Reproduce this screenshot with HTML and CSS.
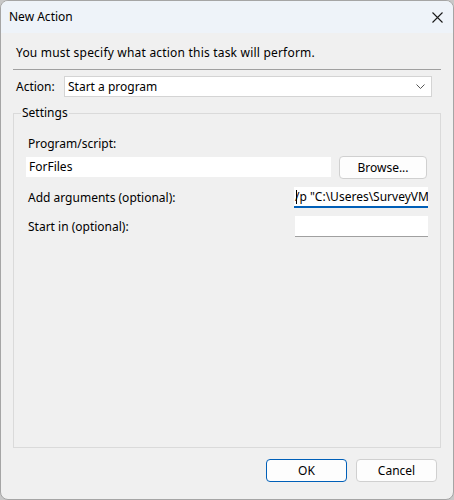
FILE: index.html
```html
<!DOCTYPE html>
<html lang="en">
<head>
<meta charset="UTF-8">
<meta name="viewport" content="width=device-width, initial-scale=1.0">
<title>New Action</title>
<link rel="stylesheet" href="styles.css">
</head>
<body>

<div class="window">
  <div class="titlebar">
    <span class="title">New Action</span>
    <svg class="close-icon" width="11" height="11" viewBox="0 0 11 11">
      <path d="M0.5 0.5 L10.5 10.5 M10.5 0.5 L0.5 10.5" stroke="#1a1a1a" stroke-width="1.1" fill="none"/>
    </svg>
  </div>

  <div class="content">
    <div class="intro">You must specify what action this task will perform.</div>
    <div class="separator"></div>

    <div class="action-row">
      <span class="action-label">Action:</span>
      <div class="combo">
        <span>Start a program</span>
        <svg width="9" height="5" viewBox="0 0 9 5">
          <path d="M0.5 0.5 L4.5 4.5 L8.5 0.5" stroke="#555" stroke-width="1" fill="none"/>
        </svg>
      </div>
    </div>

    <fieldset class="settings">
      <legend>Settings</legend>
      <div class="settings-body">
        <div class="field-label">Program/script:</div>
        <div class="program-row">
          <div class="textbox program-box">ForFiles</div>
          <button class="btn browse-btn">Browse...</button>
        </div>
        <div class="field-row">
          <span class="field-label">Add arguments (optional):</span>
          <div class="textbox small-box focused">
            <span class="caret"></span><span class="scrolled">/p "C:\Useres\SurveyVM'</span>
          </div>
        </div>
        <div class="field-row">
          <span class="field-label">Start in (optional):</span>
          <div class="textbox small-box start-box"></div>
        </div>
      </div>
    </fieldset>

    <div class="footer">
      <button class="btn ok-btn">OK</button>
      <button class="btn">Cancel</button>
    </div>
  </div>
</div>

</body>
</html>
```

FILE: styles.css
```css
body {
  margin: 0;
  background: #c8c8c8;
  font-family: "Noto Sans", sans-serif;
  font-size: 12px;
  color: #000;
}

.window {
  width: 454px;
  height: 500px;
  box-sizing: border-box;
  border: 1px solid #a5a5a5;
  border-radius: 8px;
  background: #f0f0f0;
  overflow: hidden;
}

.titlebar {
  height: 30px;
  background: #eef3f9;
  display: flex;
  align-items: center;
  justify-content: space-between;
  padding: 0 10px 2px 8px;
}

.close-icon {
  margin-top: 2px;
}

.content {
  padding: 0 12px;
}

.intro {
  margin-top: 12px;
  padding-left: 3px;
  line-height: 16px;
  letter-spacing: 0.2px;
}

.separator {
  margin-top: 8px;
  height: 1px;
  background: #a0a0a0;
}

.action-row {
  display: flex;
  align-items: center;
  margin-top: 6px;
  padding-left: 3px;
}

.action-label {
  width: 48px;
}

.combo {
  width: 368px;
  height: 21px;
  box-sizing: border-box;
  border: 1px solid #d4d4d4;
  background: #fff;
  display: flex;
  align-items: center;
  justify-content: space-between;
  padding: 0 6px 0 3px;
}

.settings {
  margin: 8px 0 0 0;
  padding: 0 12px 0 7px;
  border: 1px solid #dadada;
  height: 343px;
  box-sizing: border-box;
}

.settings legend {
  padding: 0 1px;
  line-height: 16px;
}

.settings-body {
  padding-left: 5px;
}

.field-label {
  padding-left: 2px;
}

.settings-body > .field-label {
  margin-top: 15px;
  line-height: 16px;
}

.program-row {
  display: flex;
  align-items: center;
  gap: 8px;
  margin-top: 4px;
}

.textbox {
  height: 21px;
  box-sizing: border-box;
  background: #fff;
  border-bottom: 1px solid #a0a0a0;
  line-height: 19px;
  padding: 0 3px;
  white-space: nowrap;
  overflow: hidden;
}

.program-box {
  width: 305px;
  border-bottom-color: #f0f0f0;
}

.btn {
  height: 23px;
  box-sizing: border-box;
  border: 1px solid #d0d0d0;
  border-radius: 4px;
  background: #fdfdfd;
  font-family: "Noto Sans", sans-serif;
  font-size: 12px;
  color: #000;
  padding: 0;
}

.browse-btn {
  width: 88px;
}

.field-row {
  display: flex;
  align-items: center;
  justify-content: space-between;
  margin-top: 8px;
}

.small-box {
  width: 134px;
}

.focused {
  border-bottom: 2px solid #005fb8;
  position: relative;
  padding: 0;
}

.scrolled {
  display: inline-block;
  margin-left: 1px;
}

.caret {
  position: absolute;
  left: 2px;
  top: 3px;
  width: 1px;
  height: 14px;
  background: #000;
}

.start-box {
  width: 133px;
}

.footer {
  display: flex;
  justify-content: flex-end;
  gap: 9px;
  margin-top: 11px;
  padding-right: 4px;
}

.footer .btn {
  width: 81px;
}

.ok-btn {
  border-color: #005fb8;
}
```
